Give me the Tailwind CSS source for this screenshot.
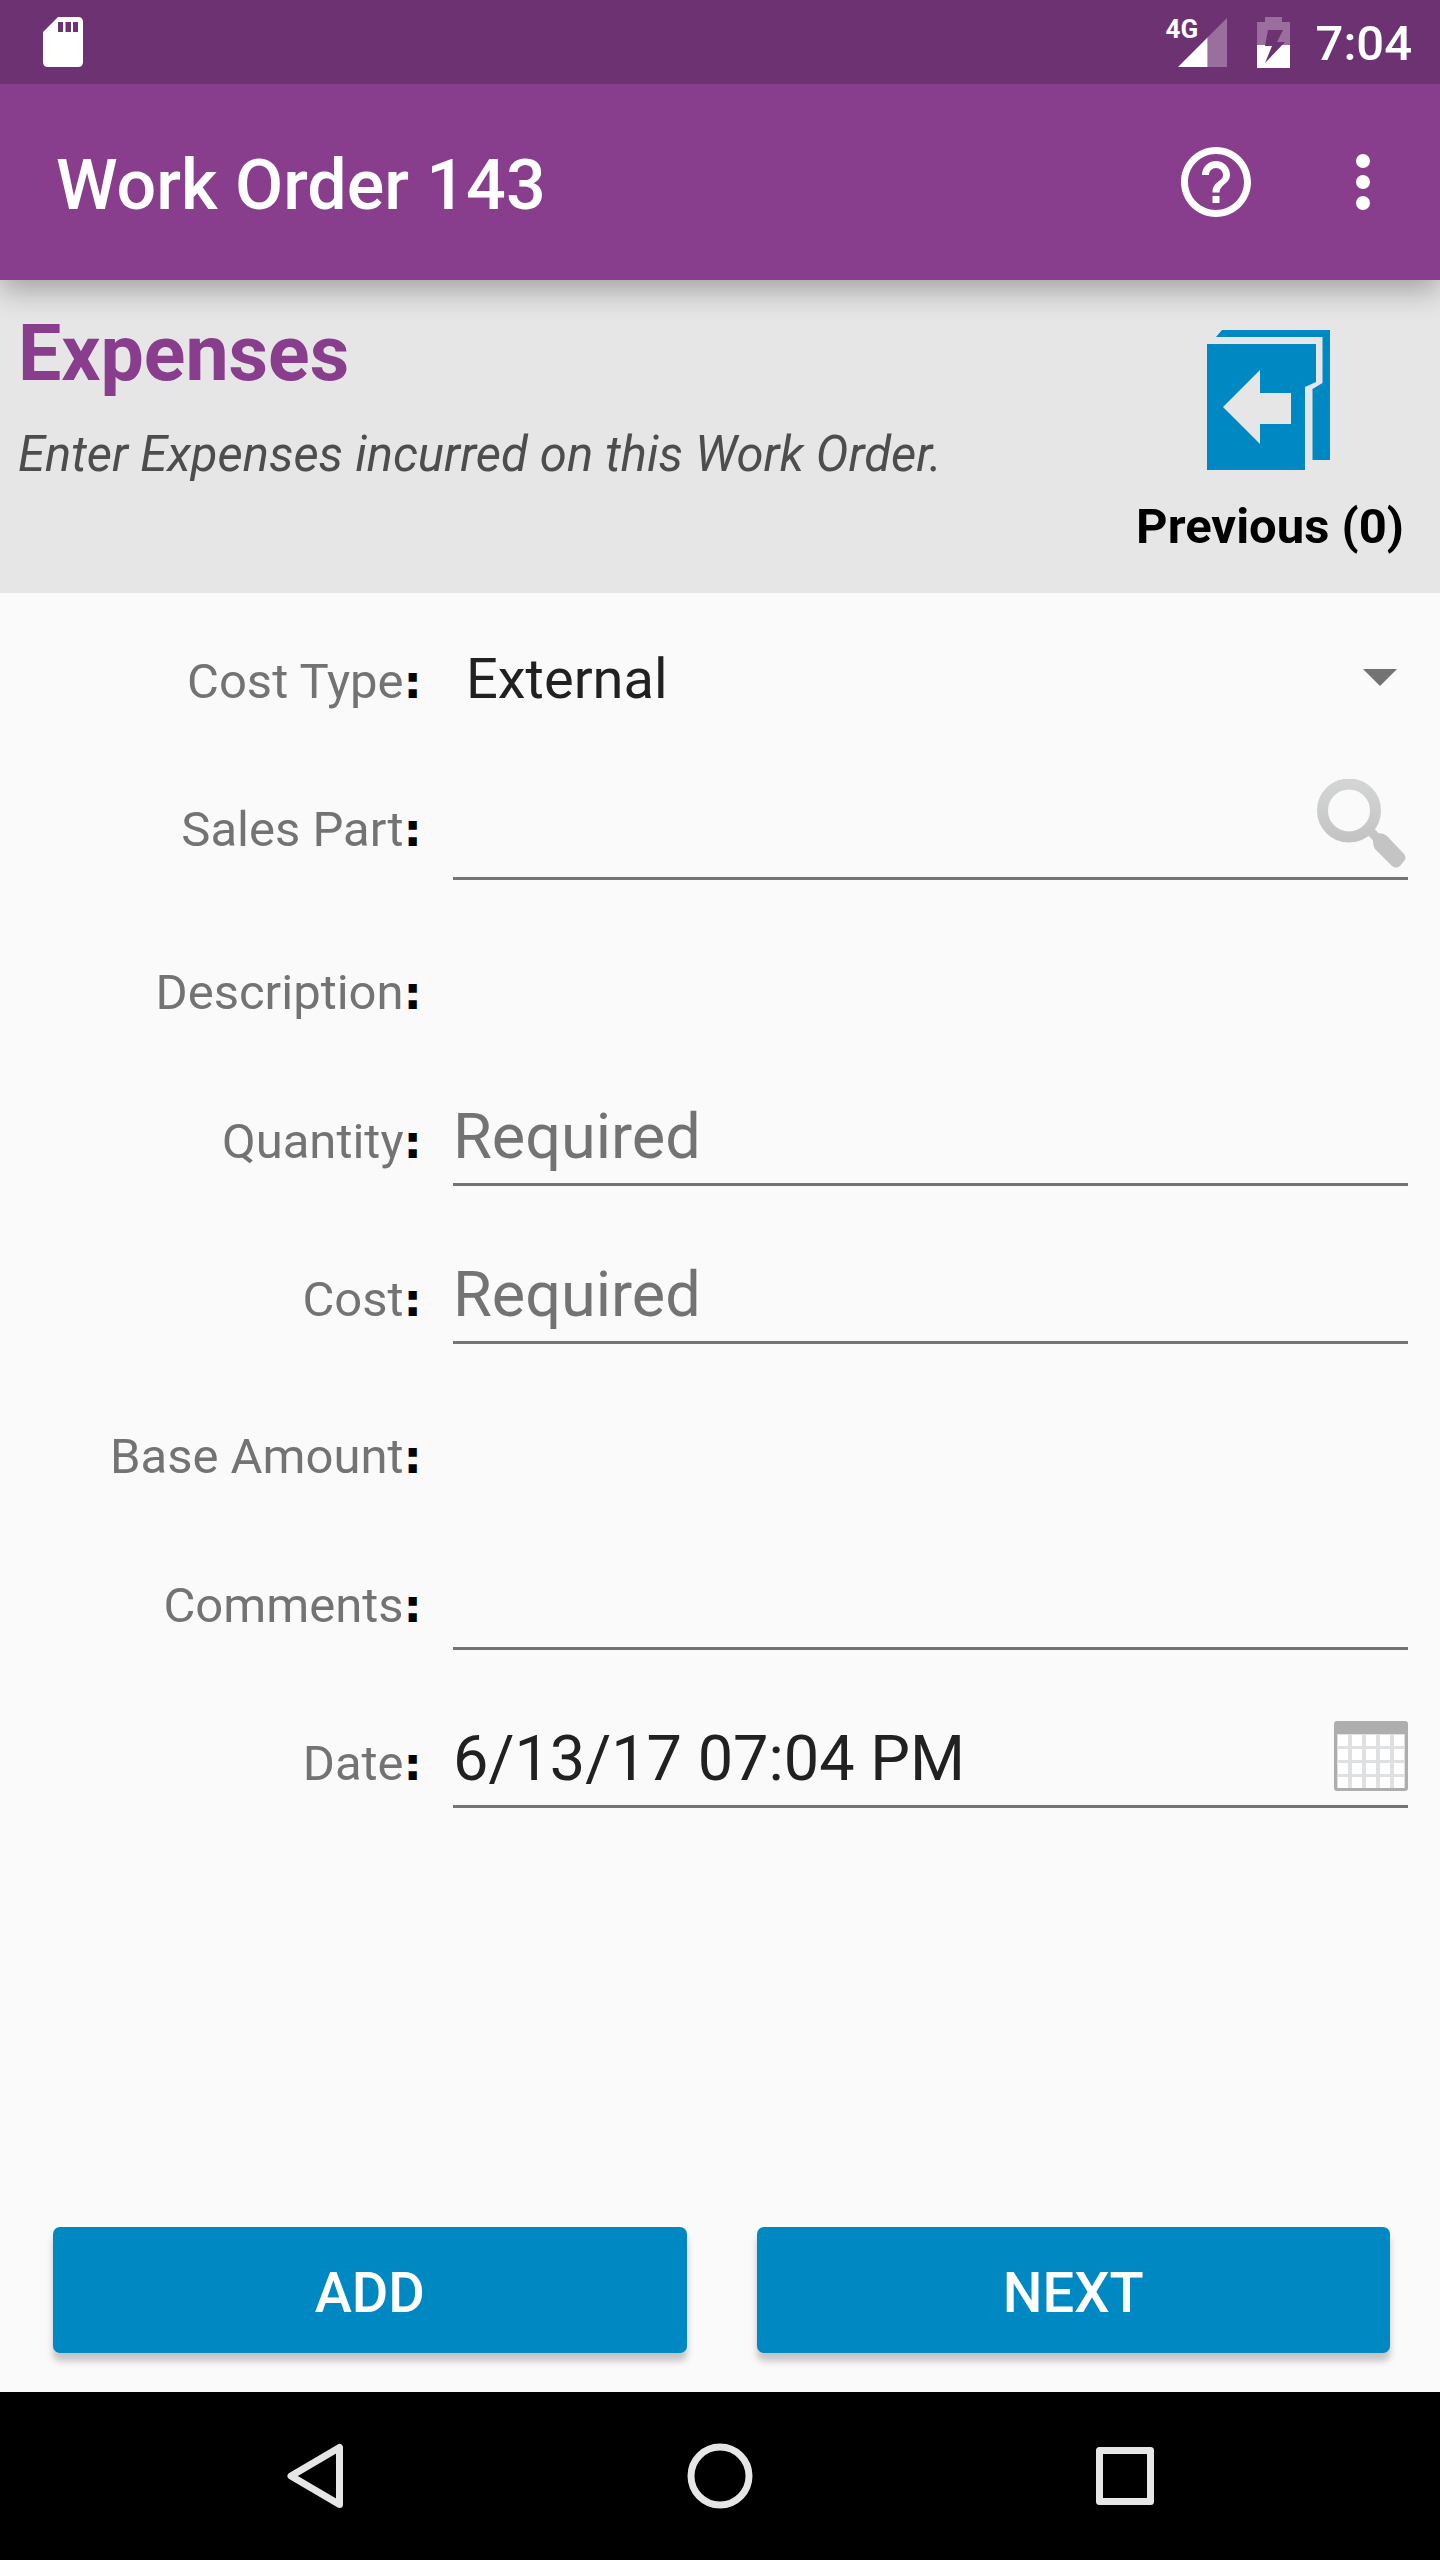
<!DOCTYPE html>
<html lang="en">
<head>
<meta charset="utf-8">
<meta name="viewport" content="width=device-width, initial-scale=1">
<title>Work Order 143 - Expenses</title>
<script src="https://cdn.jsdelivr.net/npm/@tailwindcss/browser@4"></script>
</head>
<body class="bg-[#fafafa] font-['Roboto',sans-serif] text-[#212121]">
<div class="flex min-h-screen flex-col">

  <header class="relative z-10 bg-[#883e8c] text-white shadow-[0_10px_28px_rgba(0,0,0,0.3)]">
    <!-- System status bar -->
    <div class="flex h-21 items-center justify-between bg-[#6d3272] pr-7 pl-[43px]">
      <svg class="h-[50px] w-10" viewBox="0 0 40 50" fill="currentColor" role="img" aria-label="SD card"><path fill-rule="evenodd" d="M15 0H35Q40 0 40 5V45Q40 50 35 50H5Q0 50 0 45V15ZM15 5V15H20V5ZM22.500 5V15H28V5ZM30 5V15H35V5Z"/></svg>
      <div class="flex items-center">
        <div class="relative h-[50px] w-[61px]">
          <span class="absolute top-0 left-0 text-[26px] leading-6 font-bold">4G</span>
          <svg class="absolute right-0 bottom-0 h-[49px] w-[49px]" viewBox="0 0 49 49" role="img" aria-label="Signal"><path d="M49 0V49H29.500V19.500Z" fill="#9a6f9d"/><path d="M29.500 19.500V49H0Z" fill="#fff"/></svg>
        </div>
        <svg class="ml-[30px] h-[51px] w-[33px]" viewBox="0 0 33 51" role="img" aria-label="Battery charging"><path d="M8 0H25V5H33V28H0V5H8Z" fill="#9a6f9d"/><path d="M0 28H33V51H0Z" fill="#fff"/><path d="M11 13H26L20 25H28L8 46L15 29H8Z" fill="#6d3272"/></svg>
        <span class="ml-[26px] pt-1 text-[49px] leading-[58px] font-medium">7:04</span>
      </div>
    </div>
    <!-- App bar -->
    <div class="flex h-49 items-center pr-[35px] pl-14">
      <h1 class="grow pt-1.5 text-[70px] leading-[82px] font-medium">Work Order 143</h1>
      <button type="button" aria-label="Help"><svg class="size-21" viewBox="0 0 24 24" fill="currentColor"><path d="M11 18h2v-2h-2v2zm1-16C6.480 2 2 6.480 2 12s4.480 10 10 10 10-4.480 10-10S17.520 2 12 2zm0 18c-4.410 0-8-3.590-8-8s3.590-8 8-8 8 3.590 8 8-3.590 8-8 8zm0-14c-2.210 0-4 1.790-4 4h2c0-1.100.9-2 2-2s2 .9 2 2c0 2-3 1.750-3 5h2c0-2.250 3-2.500 3-5 0-2.210-1.790-4-4-4z"/></svg></button>
      <button type="button" aria-label="More options" class="ml-[63px]"><svg class="size-21" viewBox="0 0 24 24" fill="currentColor"><circle cx="12" cy="6" r="2"/><circle cx="12" cy="12" r="2"/><circle cx="12" cy="18" r="2"/></svg></button>
    </div>
  </header>

  <section class="flex items-start justify-between bg-[#e6e6e6] pr-9 pb-[37px] pl-[18px]">
    <div class="pt-7">
      <h2 class="text-[77px] leading-[92px] font-bold text-[#883e8c]">Expenses</h2>
      <p class="pt-[26px] text-[49px] leading-[58px] text-[#4d4d4d] italic">Enter Expenses incurred on this Work Order.</p>
    </div>
    <button type="button" class="flex flex-col items-center pt-[50px] text-[49px] leading-[58px] font-bold text-black">
      <svg class="mr-1 mb-7 h-[140px] w-[123px]" viewBox="0 0 123 140" fill="#0088c3"><path d="M15 0H123V130H105.500V59L115.500 53V7H9Z"/><path fill-rule="evenodd" d="M0 14H109V52L98 57V140H0ZM16 77L53 114V94H84V63H53V40Z"/></svg>
      Previous (0)
    </button>
  </section>

  <form class="flex grow flex-col">
    <div class="flex items-baseline pt-[53px] pr-8 pb-[39px]">
      <label for="cost-type" class="w-108 shrink-0 pr-2.5 text-right text-[49px] leading-[58px] text-[#737373]">Cost Type<span class="font-['DejaVu_Sans',sans-serif] text-[46px] leading-10 font-bold text-black">:</span></label>
      <div class="relative ml-[21px] grow">
        <select id="cost-type" class="block w-full appearance-none pl-[13px] text-[56px] leading-[66px]"><option>External</option></select>
        <svg class="pointer-events-none absolute top-[23px] right-[11px] h-[17px] w-[34px]" viewBox="0 0 34 17" fill="#737373"><path d="M0 0H34L17 17Z"/></svg>
      </div>
    </div>

    <div class="flex items-baseline pt-7 pr-8 pb-[35px]">
      <label for="sales-part" class="w-108 shrink-0 pr-2.5 text-right text-[49px] leading-[58px] text-[#737373]">Sales Part<span class="font-['DejaVu_Sans',sans-serif] text-[46px] leading-10 font-bold text-black">:</span></label>
      <div class="ml-[21px] flex grow items-end border-b-3 border-[#737373]">
        <input id="sales-part" type="text" class="h-[90px] min-w-0 grow pb-4 text-[63px] leading-[74px] outline-none">
        <button type="button" aria-label="Search sales parts" class="mb-[9px]"><svg class="h-[89px] w-[91px]" viewBox="0 0 91 89" fill="none"><defs><linearGradient id="lens" x1="0" y1="0" x2="0" y2="1"><stop offset="0" stop-color="#d3d5d5"/><stop offset="1" stop-color="#c4c4c4"/></linearGradient></defs><circle cx="32" cy="31.500" r="26.500" stroke="url(#lens)" stroke-width="11"/><path d="M51 50L60 59" stroke="#c6c6c6" stroke-width="9"/><path d="M56 62Q55 56 60 55Q65 53 70 57L87 75Q90 79 87 82L83 87Q79 90 75 87L58 70Q56 67 56 62Z" fill="#c4c4c4"/></svg></button>
      </div>
    </div>

    <div class="flex items-baseline pt-[49px] pr-8 pb-[41px]">
      <label for="description" class="w-108 shrink-0 pr-2.5 text-right text-[49px] leading-[58px] text-[#737373]">Description<span class="font-['DejaVu_Sans',sans-serif] text-[46px] leading-10 font-bold text-black">:</span></label>
      <output id="description" class="ml-[21px] grow text-[49px] leading-[58px]"></output>
    </div>

    <div class="flex items-baseline pt-9 pr-8 pb-[35px]">
      <label for="quantity" class="w-108 shrink-0 pr-2.5 text-right text-[49px] leading-[58px] text-[#737373]">Quantity<span class="font-['DejaVu_Sans',sans-serif] text-[46px] leading-10 font-bold text-black">:</span></label>
      <div class="ml-[21px] flex grow border-b-3 border-[#737373]">
        <input id="quantity" type="text" inputmode="decimal" placeholder="Required" class="h-21 min-w-0 grow pb-2.5 text-[63px] leading-[74px] outline-none placeholder:text-[#737373]">
      </div>
    </div>

    <div class="flex items-baseline pt-9 pr-8 pb-[35px]">
      <label for="cost" class="w-108 shrink-0 pr-2.5 text-right text-[49px] leading-[58px] text-[#737373]">Cost<span class="font-['DejaVu_Sans',sans-serif] text-[46px] leading-10 font-bold text-black">:</span></label>
      <div class="ml-[21px] flex grow border-b-3 border-[#737373]">
        <input id="cost" type="text" inputmode="decimal" placeholder="Required" class="h-21 min-w-0 grow pb-2.5 text-[63px] leading-[74px] outline-none placeholder:text-[#737373]">
      </div>
    </div>

    <div class="flex items-baseline pt-[49px] pr-8 pb-[41px]">
      <label for="base-amount" class="w-108 shrink-0 pr-2.5 text-right text-[49px] leading-[58px] text-[#737373]">Base Amount<span class="font-['DejaVu_Sans',sans-serif] text-[46px] leading-10 font-bold text-black">:</span></label>
      <output id="base-amount" class="ml-[21px] grow text-[49px] leading-[58px]"></output>
    </div>

    <div class="flex items-baseline pt-9 pr-8 pb-[35px]">
      <label for="comments" class="w-108 shrink-0 pr-2.5 text-right text-[49px] leading-[58px] text-[#737373]">Comments<span class="font-['DejaVu_Sans',sans-serif] text-[46px] leading-10 font-bold text-black">:</span></label>
      <div class="ml-[21px] flex grow border-b-3 border-[#737373]">
        <input id="comments" type="text" class="h-21 min-w-0 grow pb-2.5 text-[63px] leading-[74px] outline-none">
      </div>
    </div>

    <div class="flex items-baseline pt-9 pr-8 pb-[35px]">
      <label for="date" class="w-108 shrink-0 pr-2.5 text-right text-[49px] leading-[58px] text-[#737373]">Date<span class="font-['DejaVu_Sans',sans-serif] text-[46px] leading-10 font-bold text-black">:</span></label>
      <div class="ml-[21px] flex grow items-end border-b-3 border-[#737373]">
        <input id="date" type="text" value="6/13/17 07:04 PM" class="h-21 min-w-0 grow pb-2.5 text-[63px] leading-[74px] outline-none">
        <button type="button" aria-label="Pick a date" class="mb-3.5"><svg class="h-[70px] w-[74px]" viewBox="0 0 74 70"><rect width="74" height="70" rx="3" fill="#aeaeae"/><path d="M3 13H71V67H3Z" fill="#dfe0e1"/><path d="M9 14V67M23 14V67M37 14V67M51 14V67M65 14V67" stroke="#fff" stroke-width="10" stroke-dasharray="11 3"/></svg></button>
      </div>
    </div>

    <div class="mt-auto grid grid-cols-2 gap-[70px] pr-[50px] pb-[39px] pl-[53px] text-[56px] leading-[66px] font-medium text-white">
      <button type="submit" class="h-[126px] rounded-[7px] bg-[#0088c3] pt-1.5 shadow-[0_8px_7px_rgba(0,0,0,0.22)]">ADD</button>
      <button type="button" class="h-[126px] rounded-[7px] bg-[#0088c3] pt-1.5 shadow-[0_8px_7px_rgba(0,0,0,0.22)]">NEXT</button>
    </div>
  </form>

  <!-- System navigation bar -->
  <nav class="grid h-42 grid-cols-3 bg-black px-28">
    <button type="button" aria-label="Back" class="flex items-center justify-center"><svg class="h-[66px] w-[58px]" viewBox="0 0 58 66" fill="none" stroke="#e6e6e6" stroke-width="7" stroke-linejoin="round"><path d="M53.500 4.500V61.500L5 33Z"/></svg></button>
    <button type="button" aria-label="Home" class="flex items-center justify-center"><svg class="size-[66px]" viewBox="0 0 66 66" fill="none" stroke="#e6e6e6" stroke-width="7"><circle cx="33" cy="33" r="29"/></svg></button>
    <button type="button" aria-label="Recent apps" class="flex items-center justify-center"><svg class="size-[58px]" viewBox="0 0 58 58" fill="none" stroke="#e6e6e6" stroke-width="7" stroke-linejoin="round"><path d="M3.500 3.500H54.500V54.500H3.500Z"/></svg></button>
  </nav>
</div>
</body>
</html>
